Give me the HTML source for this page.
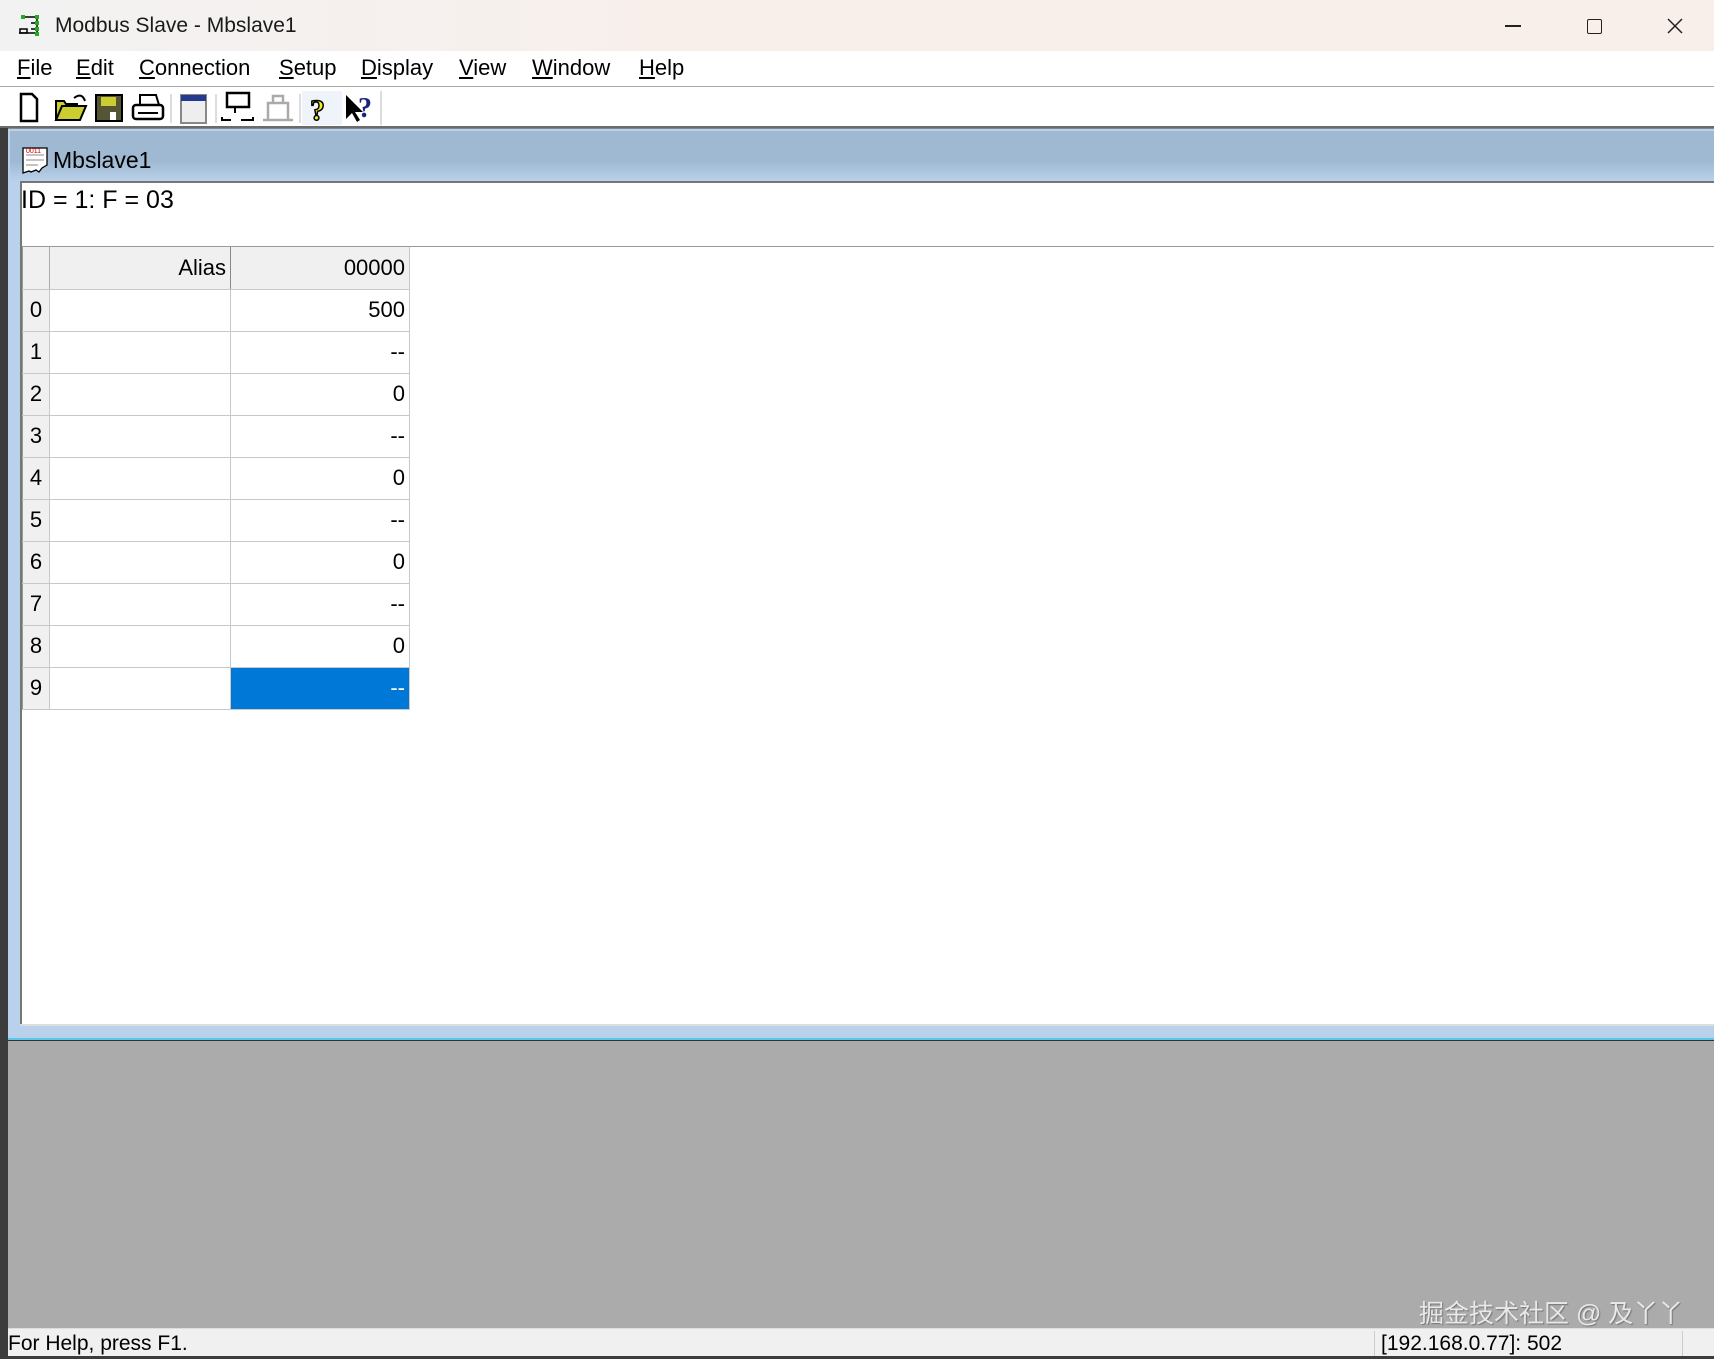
<!DOCTYPE html>
<html><head><meta charset="utf-8"><style>
*{margin:0;padding:0;box-sizing:border-box}
body{width:1714px;height:1359px;overflow:hidden;position:relative;background:#fff;font-family:"Liberation Sans","Noto Sans CJK SC",sans-serif;color:#000}
.a{position:absolute}
.title{left:0;top:0;width:1714px;height:51px;background:linear-gradient(90deg,#f2f2f2,#f8efeb 40%,#f8efeb);}
.menu{left:0;top:51px;width:1714px;height:36px;background:#fff;border-bottom:1px solid #a8a8a8}
.menu span{position:absolute;top:4px;font-size:22px}
.tb{left:0;top:87px;width:1714px;height:41px;background:#fff;border-bottom:2px solid #6b6b6b}
.grid td{border-right:1px solid #c8c8c8;border-bottom:1px solid #c8c8c8;height:42px;font-size:22px;text-align:right;padding-right:4px}
</style></head><body>
<div class="a" style="left:0;top:0;width:8px;height:1359px;background:#3c3c3c"></div>
<div class="a title"></div>
<svg class="a" style="left:17px;top:14px" width="26" height="24" viewBox="0 0 26 24"><g fill="none" stroke="#000" stroke-width="1.5"><path d="M6 3h14M20 3v16M14 9h6M14 15h6M2 19h18"/><rect x="3" y="15" width="7" height="4"/></g><g fill="#2a2"><rect x="4" y="1" width="4" height="4"/><rect x="18" y="1" width="4" height="4"/><rect x="18" y="7" width="4" height="4"/><rect x="18" y="13" width="4" height="4"/><rect x="18" y="18" width="4" height="4"/></g></svg>
<div class="a" style="left:55px;top:14px;font-size:21px;color:#1a1a1a">Modbus Slave - Mbslave1</div>
<div class="a" style="left:1505px;top:25px;width:16px;height:1.5px;background:#222"></div>
<div class="a" style="left:1587px;top:19px;width:15px;height:15px;border:1.5px solid #222;border-radius:2px"></div>
<svg class="a" style="left:1667px;top:18px" width="16" height="16"><path d="M1 1L15 15M15 1L1 15" stroke="#222" stroke-width="1.5"/></svg>
<div class="a menu">
<span style="left:17px"><u>F</u>ile</span><span style="left:76px"><u>E</u>dit</span><span style="left:139px"><u>C</u>onnection</span><span style="left:279px"><u>S</u>etup</span><span style="left:361px"><u>D</u>isplay</span><span style="left:459px"><u>V</u>iew</span><span style="left:532px"><u>W</u>indow</span><span style="left:639px"><u>H</u>elp</span>
</div>
<div class="a tb">
<svg width="400" height="40" viewBox="0 0 400 40">
<path d="M21 7h11l5 5v22H21z" fill="#fff" stroke="#000" stroke-width="2.5"/>
<path d="M56 33l6-14h24l-6 14z M56 33V14h8l2 3h12" fill="#cc3" stroke="#000" stroke-width="2"/>
<path d="M74 11q8-6 11 3" fill="none" stroke="#000" stroke-width="2"/>
<rect x="96" y="8" width="26" height="26" fill="#553" stroke="#000" stroke-width="2"/><rect x="101" y="10" width="15" height="9" fill="#cc3"/><rect x="110" y="25" width="6" height="8" fill="#fff"/>
<rect x="133" y="18" width="30" height="14" rx="3" fill="#fff" stroke="#000" stroke-width="2.5"/><path d="M140 18V8h16l3 10M138 26h20" stroke="#000" stroke-width="2" fill="none"/>
<line x1="171" y1="7" x2="171" y2="36" stroke="#bbb"/>
<rect x="181" y="8" width="25" height="28" fill="#eee" stroke="#888" stroke-width="2"/><rect x="181" y="8" width="25" height="6" fill="#223a8f"/>
<line x1="216" y1="7" x2="216" y2="36" stroke="#bbb"/>
<rect x="227" y="6" width="22" height="14" fill="#fff" stroke="#000" stroke-width="2.5"/><path d="M235 20v6M222 30v3h9M241 33h12v-3" stroke="#000" stroke-width="2" fill="none"/>
<path d="M263 33h30M268 32V16h20v16M273 16V9h10v7" stroke="#aaa" stroke-width="2.5" fill="none"/>
<line x1="300" y1="7" x2="300" y2="36" stroke="#bbb"/>
<rect x="302" y="4" width="40" height="34" fill="#eef4fa"/>
<text x="310" y="33" font-size="30" font-weight="bold" fill="#ee2" stroke="#000" stroke-width="1.5" font-family="Liberation Serif">?</text>
<path d="M346 8v24l6-6 5 9 3-2-5-8h8z" fill="#000"/><text x="358" y="30" font-size="28" font-weight="bold" fill="#1a237e" font-family="Liberation Serif">?</text>
<line x1="381" y1="4" x2="381" y2="38" stroke="#bbb"/>
</svg>
</div>
<div class="a" style="left:8px;top:128px;width:1706px;height:912px;background:#b9d1ea;border-top:1px solid #888"></div>
<div class="a" style="left:10px;top:131px;width:1704px;height:50px;background:linear-gradient(#a0b9d3 60%,#b9d1ea)"></div>
<svg class="a" style="left:21px;top:146px" width="28" height="28"><path d="M2 2h24v17l-5 3-3 4-3-2-5 2-2-1-6 2z" fill="#fff" stroke="#000" stroke-width="1.3"/><path d="M5 9h18M5 14h18M5 19h12" stroke="#888"/><text x="5" y="7" font-size="7" fill="#c00" font-family="Liberation Sans">0011</text></svg>
<div class="a" style="left:53px;top:147px;font-size:23px">Mbslave1</div>
<div class="a" style="left:20px;top:181px;width:1694px;height:845px;background:#fff;border-left:2px solid #777;border-top:2px solid #777"></div>
<div class="a" style="left:21px;top:186px;font-size:25px">ID = 1: F = 03</div>
<div class="a" style="left:22px;top:246px;width:1692px;height:1px;background:#999"></div>
<table class="a grid" style="left:22px;top:247px;border-collapse:collapse;border-left:1px solid #999">
<tr style="background:#f0f0f0"><td style="width:27px;border-right:1px solid #aaa"></td><td style="width:181px;border-right:1px solid #888">Alias</td><td style="width:179px">00000</td></tr>
<tr><td style="background:#f0f0f0;text-align:center;padding:0">0</td><td></td><td>500</td></tr>
<tr><td style="background:#f0f0f0;text-align:center;padding:0">1</td><td></td><td>--</td></tr>
<tr><td style="background:#f0f0f0;text-align:center;padding:0">2</td><td></td><td>0</td></tr>
<tr><td style="background:#f0f0f0;text-align:center;padding:0">3</td><td></td><td>--</td></tr>
<tr><td style="background:#f0f0f0;text-align:center;padding:0">4</td><td></td><td>0</td></tr>
<tr><td style="background:#f0f0f0;text-align:center;padding:0">5</td><td></td><td>--</td></tr>
<tr><td style="background:#f0f0f0;text-align:center;padding:0">6</td><td></td><td>0</td></tr>
<tr><td style="background:#f0f0f0;text-align:center;padding:0">7</td><td></td><td>--</td></tr>
<tr><td style="background:#f0f0f0;text-align:center;padding:0">8</td><td></td><td>0</td></tr>
<tr><td style="background:#f0f0f0;text-align:center;padding:0">9</td><td></td><td style="background:#0078d7;color:#fff">--</td></tr>
</table>
<div class="a" style="left:20px;top:1024px;width:1694px;height:2px;background:#ddd"></div>
<div class="a" style="left:8px;top:1038px;width:1706px;height:2px;background:#5ac8e8"></div>
<div class="a" style="left:8px;top:1040px;width:1706px;height:288px;background:#ababab;border-top:1px solid #333"></div>
<div class="a" style="left:1419px;top:1294px;font-size:25px;color:#e8e8e8;text-shadow:1px 1px 1px #777">掘金技术社区 @ 及丫丫</div>
<div class="a" style="left:0;top:1328px;width:1714px;height:31px;background:#f0f0f0;border-top:1px solid #ddd"></div>
<div class="a" style="left:0;top:1328px;width:8px;height:31px;background:#3c3c3c"></div>
<div class="a" style="left:8px;top:1332px;font-size:21px">For Help, press F1.</div>
<div class="a" style="left:1374px;top:1331px;width:1px;height:25px;background:#ccc"></div>
<div class="a" style="left:1381px;top:1332px;font-size:21px">[192.168.0.77]: 502</div>
<div class="a" style="left:1682px;top:1331px;width:1px;height:25px;background:#ccc"></div>
<div class="a" style="left:0;top:1356px;width:1714px;height:3px;background:#3c3c3c"></div>
</body></html>
